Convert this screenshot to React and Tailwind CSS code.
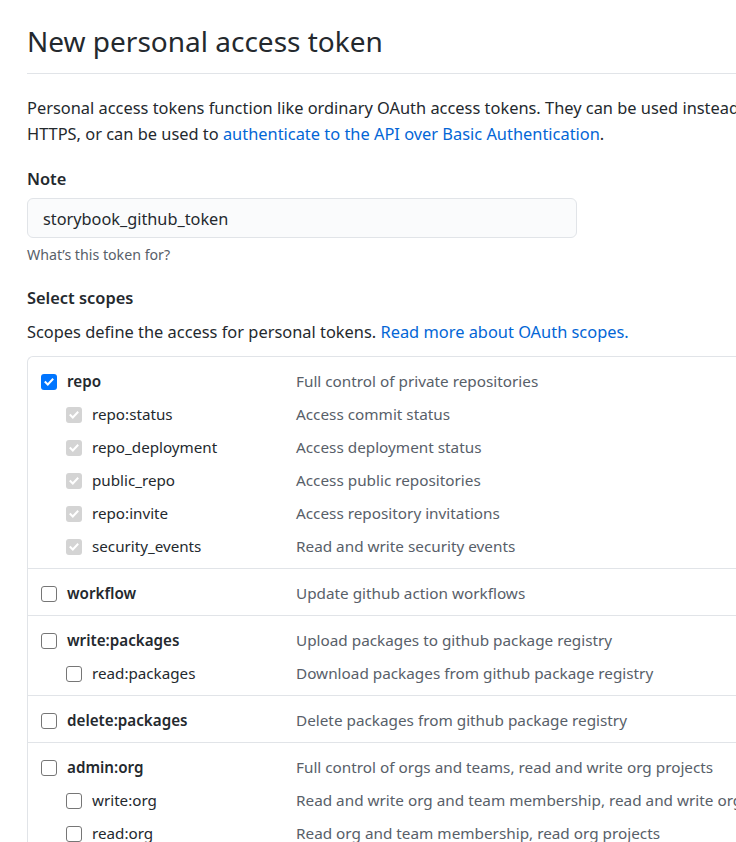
import React from 'react'

const SCOPES = [
  {
    name: 'repo', desc: 'Full control of private repositories', checked: true,
    children: [
      ['repo:status', 'Access commit status'],
      ['repo_deployment', 'Access deployment status'],
      ['public_repo', 'Access public repositories'],
      ['repo:invite', 'Access repository invitations'],
      ['security_events', 'Read and write security events'],
    ],
  },
  { name: 'workflow', desc: 'Update github action workflows', children: [] },
  {
    name: 'write:packages', desc: 'Upload packages to github package registry',
    children: [['read:packages', 'Download packages from github package registry']],
  },
  { name: 'delete:packages', desc: 'Delete packages from github package registry', children: [] },
  {
    name: 'admin:org', desc: 'Full control of orgs and teams, read and write org projects',
    children: [
      ['write:org', 'Read and write org and team membership, read and write org projects'],
      ['read:org', 'Read org and team membership, read org projects'],
    ],
  },
  {
    name: 'admin:public_key', desc: 'Full control of user public keys',
    children: [
      ['write:public_key', 'Write user public keys'],
      ['read:public_key', 'Read user public keys'],
    ],
  },
]

function Checkbox({ state }) {
  // state: 'checked' | 'disabled' | 'off'
  if (state === 'off') {
    return <span className="block w-4 h-4 shrink-0 rounded-[3px] border-[1.5px] border-[#767676] bg-white" />
  }
  const bg = state === 'checked' ? 'bg-[#0075ff]' : 'bg-[#d4d4d4]'
  return (
    <span className={`flex w-4 h-4 shrink-0 items-center justify-center rounded-[3px] ${bg}`}>
      <svg width="12" height="12" viewBox="0 0 12 12" fill="none" stroke="white" strokeWidth="2" strokeLinecap="square">
        <polyline points="2.5 6.2 4.8 8.5 9.5 3.5" />
      </svg>
    </span>
  )
}

function ScopeRow({ name, desc, state, sub }) {
  return (
    <div className="flex items-center h-[33px]">
      <div className={`w-[268px] shrink-0 flex items-center gap-[10px] ${sub ? 'pl-[38px]' : 'pl-[13px]'}`}>
        <Checkbox state={state} />
        <span className={`text-[15.2px] text-[#24292e] ${sub ? '' : 'font-semibold'}`}>{name}</span>
      </div>
      <div className="text-[15.3px] text-[#586069] whitespace-nowrap">{desc}</div>
    </div>
  )
}

export default function App() {
  return (
    <div className="w-[736px] h-[842px] overflow-hidden bg-white font-['Noto_Sans',sans-serif] text-[16.4px] text-[#24292e]">
      <div className="w-[1000px] pl-[27px]">
        <div className="pt-[24px] pb-[14px] border-b border-[#e1e4e8]">
          <h2 className="text-[28px] leading-[35px] font-normal">New personal access token</h2>
        </div>

        <p className="mt-[21px] leading-[25.6px] whitespace-nowrap">
          Personal access tokens function like ordinary OAuth access tokens. They can be used instead of a password for Git over
          <br />
          HTTPS, or can be used to <a className="text-[#0366d6]">authenticate to the API over Basic Authentication</a>.
        </p>

        <div className="mt-[21px] leading-[24px] font-semibold">Note</div>
        <div className="mt-[7px] w-[550px] h-[40px] rounded-[6px] border border-[#e1e4e8] bg-[#fafbfc] flex items-center pl-[15px] text-[16.3px] leading-[24px]">
          <span className="translate-y-[1px]">storybook_github_token</span>
        </div>
        <div className="mt-[7px] text-[14.2px] leading-[20px] text-[#586069]">What’s this token for?</div>

        <div className="mt-[21px] leading-[24px] font-semibold">Select scopes</div>
        <div className="mt-[10px] leading-[24px]">
          Scopes define the access for personal tokens. <a className="text-[#0366d6]">Read more about OAuth scopes.</a>
        </div>

        <div className="mt-[12px] rounded-tl-[6px] border-l border-t border-[#e1e4e8]">
          {SCOPES.map((g, i) => (
            <div key={g.name} className={`pt-2 pb-[5px] ${i > 0 ? 'border-t border-[#e1e4e8]' : ''}`}>
              <ScopeRow name={g.name} desc={g.desc} state={g.checked ? 'checked' : 'off'} />
              {g.children.map(([n, d]) => (
                <ScopeRow key={n} name={n} desc={d} sub state={g.checked ? 'disabled' : 'off'} />
              ))}
            </div>
          ))}
        </div>
      </div>
    </div>
  )
}
